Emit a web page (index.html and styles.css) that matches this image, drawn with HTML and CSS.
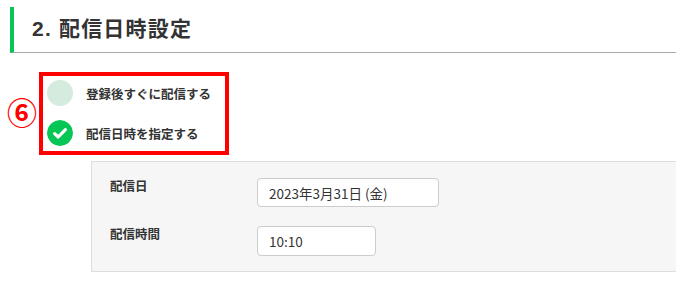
FILE: index.html
```html
<!DOCTYPE html>
<html lang="ja">
<head>
<meta charset="utf-8">
<link rel="stylesheet" href="styles.css">
</head>
<body>
<div class="page">
  <h2 class="section-title">2. 配信日時設定</h2>
  <div class="options-row">
    <span class="marker">⑥</span>
    <div class="options-box">
      <div class="option">
        <span class="radio radio-off"></span>
        <span class="option-label">登録後すぐに配信する</span>
      </div>
      <div class="option">
        <svg class="radio" viewBox="0 0 26 26" width="26" height="26">
          <circle cx="13" cy="13" r="13" fill="#06c755"/>
          <path d="M7.6 13.6 L11.2 17 L18.4 9.6" fill="none" stroke="#fff" stroke-width="3.2" stroke-linecap="round" stroke-linejoin="round"/>
        </svg>
        <span class="option-label">配信日時を指定する</span>
      </div>
    </div>
  </div>
  <div class="panel">
    <div class="field-label">配信日</div>
    <div class="field-input wide">2023年3月31日 (金)</div>
    <div class="field-label">配信時間</div>
    <div class="field-input narrow">10:10</div>
  </div>
</div>
</body>
</html>
```
FILE: styles.css
```css
html, body {
  margin: 0;
  padding: 0;
  background: #fff;
}
body {
  font-family: "Noto Sans CJK JP", "Noto Sans", sans-serif;
  color: #333;
  width: 676px;
  overflow: hidden;
}
.page {
  padding-top: 7px;
}
.section-title {
  margin: 0 0 0 10px;
  box-sizing: border-box;
  height: 46px;
  line-height: 44px;
  border-left: 4px solid #06c755;
  border-bottom: 1px solid #aaa;
  padding-left: 18px;
  font-family: "Liberation Sans", "Noto Sans CJK JP", sans-serif;
  font-size: 21px;
  letter-spacing: 1.2px;
  font-weight: 700;
  color: #333;
}
.options-row {
  display: flex;
  align-items: center;
  margin-top: 19px;
  padding-left: 7px;
}
.marker {
  width: 32px;
  color: #f00;
  font-size: 30px;
  font-weight: 700;
  line-height: 30px;
  margin-top: -6px;
}
.options-box {
  border: 4px solid #f00;
  padding: 4px 14px 5px 4px;
  display: flex;
  flex-direction: column;
  gap: 14px;
}
.option {
  display: flex;
  align-items: center;
  gap: 13px;
  height: 26px;
}
.radio {
  width: 26px;
  height: 26px;
  border-radius: 50%;
  flex: none;
  display: block;
}
.radio-off {
  background: #d4ebdd;
}
.option-label {
  font-size: 12.5px;
  font-weight: 700;
  color: #333;
}
.panel {
  margin: 6px -2px 0 91px;
  background: #f6f6f6;
  border: 1px solid #ddd;
  padding: 16px 0 15px 18px;
  display: grid;
  grid-template-columns: 147px auto;
  row-gap: 19px;
  justify-items: start;
}
.field-label {
  font-size: 12.5px;
  font-weight: 700;
  line-height: 16px;
}
.field-input {
  background: #fff;
  border: 1px solid #ccc;
  border-radius: 4px;
  box-sizing: border-box;
  padding-left: 11px;
  font-size: 13.5px;
  color: #333;
  display: flex;
  align-items: center;
}
.wide {
  width: 182px;
  height: 29px;
}
.narrow {
  width: 119px;
  height: 30px;
}
```
